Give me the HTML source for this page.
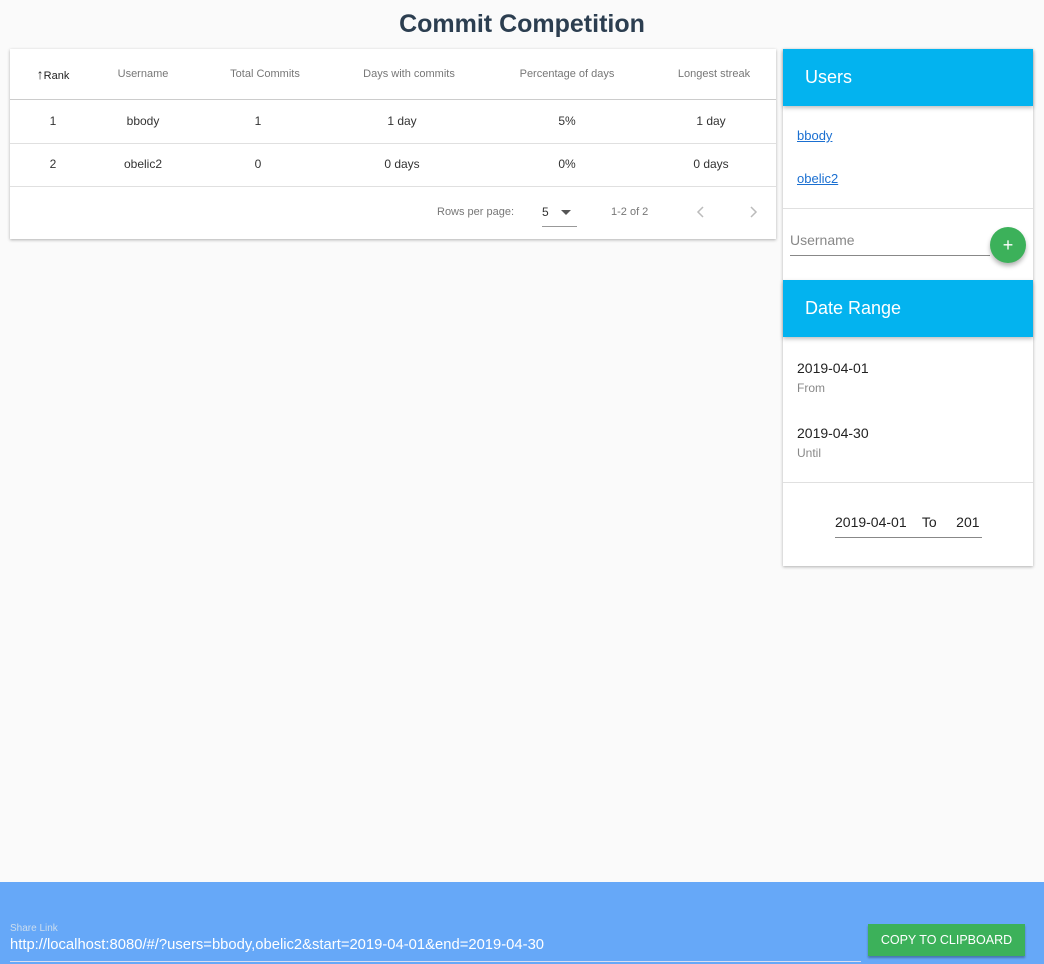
<!DOCTYPE html>
<html><head><style>
body{margin:0;width:1044px;height:964px;background:#fafafa;font-family:"Liberation Sans",sans-serif;position:relative;overflow:hidden}
.a{position:absolute}
h1{position:absolute;top:10px;left:0;width:1044px;text-align:center;margin:0;font-size:25px;color:#2c3e50;font-weight:bold}
.card{position:absolute;background:#fff;box-shadow:0 1px 3px rgba(0,0,0,.3)}
.c{position:absolute;transform:translateX(-50%);white-space:nowrap}
.th{font-size:11px;color:#777;top:19px}
.td{font-size:12px;color:#333}
.hr{position:absolute;left:0;right:0;height:1px;background:#e0e0e0}
.bh{position:absolute;left:0;right:0;background:#03b3ef;color:#fff;font-size:18px;box-shadow:0 2px 4px rgba(0,0,0,.25)}
</style></head><body>
<h1>Commit Competition</h1>
<div class="card" style="left:10px;top:49px;width:766px;height:190px">
<div class="c th" style="left:43px;color:#222;top:17px"><span style="font-size:14px">↑</span>Rank</div>
<div class="c th" style="left:133px">Username</div>
<div class="c th" style="left:255px">Total Commits</div>
<div class="c th" style="left:399px">Days with commits</div>
<div class="c th" style="left:557px">Percentage of days</div>
<div class="c th" style="left:704px">Longest streak</div>
<div class="hr" style="top:50px;background:#ccc"></div>
<div class="c td" style="left:43px;top:65px">1</div><div class="c td" style="left:133px;top:65px">bbody</div><div class="c td" style="left:248px;top:65px">1</div><div class="c td" style="left:392px;top:65px">1 day</div><div class="c td" style="left:557px;top:65px">5%</div><div class="c td" style="left:701px;top:65px">1 day</div>
<div class="hr" style="top:94px"></div>
<div class="c td" style="left:43px;top:108px">2</div><div class="c td" style="left:133px;top:108px">obelic2</div><div class="c td" style="left:248px;top:108px">0</div><div class="c td" style="left:392px;top:108px">0 days</div><div class="c td" style="left:557px;top:108px">0%</div><div class="c td" style="left:701px;top:108px">0 days</div>
<div class="hr" style="top:137px"></div>
<div class="a" style="left:427px;top:157px;font-size:11px;color:#777">Rows per page:</div>
<div class="a" style="left:532px;top:156px;font-size:12px;color:#333">5</div>
<div class="a" style="left:551px;top:161px;border:5px solid transparent;border-top-color:#555;border-bottom:0"></div>
<div class="a" style="left:532px;top:177px;width:35px;height:1px;background:#999"></div>
<div class="a" style="left:601px;top:157px;font-size:11px;color:#777">1-2 of 2</div>
<svg class="a" style="left:685px;top:156px" width="12" height="14"><path d="M8 2 L3 7 L8 12" stroke="#bbb" stroke-width="1.5" fill="none"/></svg>
<svg class="a" style="left:737px;top:156px" width="12" height="14"><path d="M4 2 L9 7 L4 12" stroke="#bbb" stroke-width="1.5" fill="none"/></svg>
</div>
<div class="card" style="left:783px;top:49px;width:250px;height:517px">
<div class="bh" style="top:0;height:57px;line-height:57px;padding-left:22px">Users</div>
<a class="a" style="left:14px;top:79px;font-size:13px;color:#1a6fd1;text-decoration:underline">bbody</a>
<a class="a" style="left:14px;top:122px;font-size:13px;color:#1a6fd1;text-decoration:underline">obelic2</a>
<div class="hr" style="top:159px"></div>
<div class="a" style="left:7px;top:183px;font-size:14px;color:#888">Username</div>
<div class="a" style="left:7px;top:206px;width:200px;height:1px;background:#888"></div>
<div class="a" style="left:207px;top:178px;width:36px;height:36px;border-radius:50%;background:#3cb15a;color:#fff;text-align:center;line-height:36px;font-size:18px;box-shadow:0 3px 5px rgba(0,0,0,.3)">+</div>
<div class="bh" style="top:231px;height:57px;line-height:57px;padding-left:22px">Date Range</div>
<div class="a" style="left:14px;top:311px;font-size:14px;color:#222">2019-04-01</div>
<div class="a" style="left:14px;top:332px;font-size:12px;color:#888">From</div>
<div class="a" style="left:14px;top:376px;font-size:14px;color:#222">2019-04-30</div>
<div class="a" style="left:14px;top:397px;font-size:12px;color:#888">Until</div>
<div class="hr" style="top:433px"></div>
<div class="a" style="left:52px;top:465px;font-size:14px;color:#222;white-space:pre">2019-04-01    To     201</div>
<div class="a" style="left:52px;top:488px;width:147px;height:1px;background:#888"></div>
</div>
<div class="a" style="left:0;top:882px;width:1044px;height:82px;background:#66a8f8">
<div class="a" style="left:10px;top:41px;font-size:10px;color:#cde">Share Link</div>
<div class="a" style="left:10px;top:55px;font-size:14.8px;color:#fff">http://localhost:8080/#/?users=bbody,obelic2&amp;start=2019-04-01&amp;end=2019-04-30</div>
<div class="a" style="left:10px;top:79px;width:851px;height:1px;background:#dde"></div>
<div class="a" style="left:868px;top:42px;width:157px;height:32px;background:#3cb15a;color:#fff;font-size:12.5px;text-align:center;line-height:32px;box-shadow:0 2px 2px rgba(0,0,0,.3)">COPY TO CLIPBOARD</div>
</div>
</body></html>
